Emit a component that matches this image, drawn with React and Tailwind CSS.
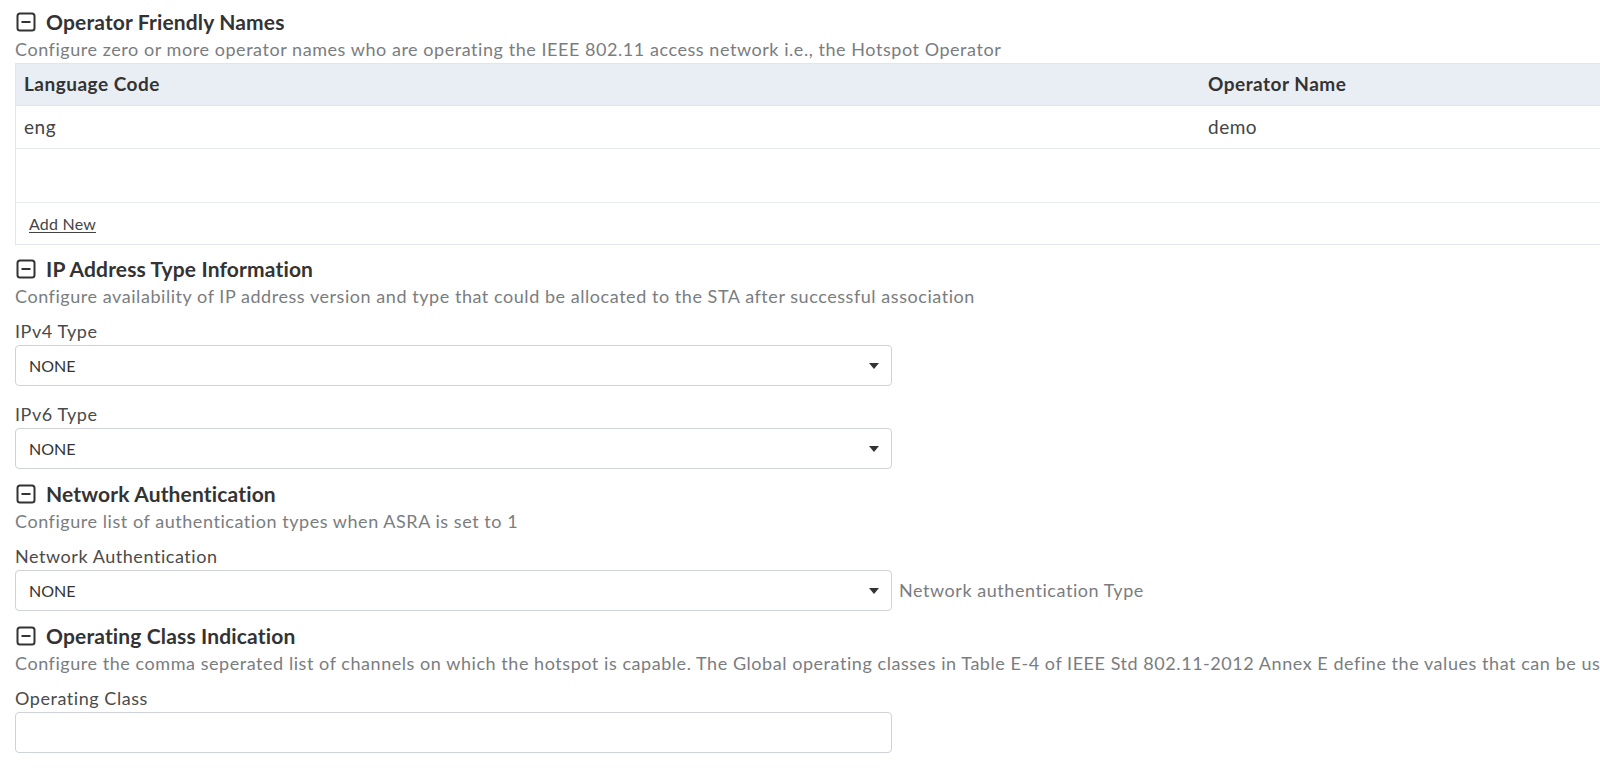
import React from "react";

function MinusBox() {
  return (
    <svg width="20" height="20" viewBox="0 0 20 20" className="shrink-0">
      <rect x="1.5" y="1.5" width="17" height="17" rx="2.5" fill="none" stroke="#333" strokeWidth="2" />
      <line x1="5.5" y1="10" x2="14.5" y2="10" stroke="#333" strokeWidth="2" />
    </svg>
  );
}

function Heading({ title }) {
  return (
    <div className="flex items-center gap-[10px] h-[26px] pl-[16px]">
      <MinusBox />
      <span className="text-[21px] tracking-[0.15px] font-bold text-[#333] leading-[26px] whitespace-nowrap">{title}</span>
    </div>
  );
}

function Desc({ children }) {
  return (
    <div className="mt-[2px] h-[24px] leading-[24px] text-[18px] tracking-[0.55px] text-[#7a7d80] pl-[15px] whitespace-nowrap">
      {children}
    </div>
  );
}

function Label({ children, first }) {
  return (
    <div className={`${first ? "mt-[11px]" : "mt-[16px]"} h-[24px] leading-[24px] text-[18px] tracking-[0.55px] text-[#4a4a4a] pl-[15px]`}>
      {children}
    </div>
  );
}

function Caret() {
  return (
    <svg width="10" height="6" viewBox="0 0 10 6">
      <path d="M0 0 L10 0 L5 6 Z" fill="#333" />
    </svg>
  );
}

function Select({ helper }) {
  return (
    <div className="mt-[2px] flex items-center pl-[15px]">
      <div className="w-[877px] h-[41px] border border-[#cfd2d6] rounded-[4px] bg-white flex items-center justify-between pl-[13px] pr-[12px]">
        <span className="text-[16px] text-[#333]">NONE</span>
        <Caret />
      </div>
      {helper && <span className="ml-[7px] text-[18px] tracking-[0.55px] text-[#7a7d80]">{helper}</span>}
    </div>
  );
}

export default function App() {
  return (
    <div className="w-[1600px] h-[768px] overflow-hidden bg-white font-['Lato',sans-serif]">
      <div className="w-[2600px] pt-[9px]">
        {/* Section 1 */}
        <Heading title="Operator Friendly Names" />
        <Desc>
          Configure zero or more operator names who are operating the IEEE 802.11 access network i.e., the Hotspot Operator
        </Desc>
        <div className="mt-[2px] ml-[15px] w-[2368px] border border-[#e1e6ec]">
          <div className="flex h-[42px] bg-[#e9eef4] border-b border-[#dfe4ea] items-center">
            <div className="w-[1184px] px-[8px] text-[19px] tracking-[0.5px] font-bold text-[#333]">Language Code</div>
            <div className="flex-1 px-[8px] text-[19px] tracking-[0.5px] font-bold text-[#333]">Operator Name</div>
          </div>
          <div className="flex h-[43px] border-b border-[#e6eaef] items-center">
            <div className="w-[1184px] px-[8px] text-[19px] tracking-[0.5px] text-[#444]">eng</div>
            <div className="flex-1 px-[8px] text-[19px] tracking-[0.5px] text-[#444]">demo</div>
          </div>
          <div className="h-[54px] border-b border-[#e6eaef]"></div>
          <div className="h-[41px] flex items-center px-[13px]">
            <span className="text-[16px] tracking-[0.2px] text-[#444] underline underline-offset-2">Add New</span>
          </div>
        </div>

        {/* Section 2 */}
        <div className="mt-[11px]">
          <Heading title="IP Address Type Information" />
          <Desc>Configure availability of IP address version and type that could be allocated to the STA after successful association</Desc>
          <Label first>IPv4 Type</Label>
          <Select />
          <Label>IPv6 Type</Label>
          <Select />
        </div>

        {/* Section 3 */}
        <div className="mt-[12px]">
          <Heading title="Network Authentication" />
          <Desc>Configure list of authentication types when ASRA is set to 1</Desc>
          <Label first>Network Authentication</Label>
          <Select helper="Network authentication Type" />
        </div>

        {/* Section 4 */}
        <div className="mt-[12px]">
          <Heading title="Operating Class Indication" />
          <Desc>
            Configure the comma seperated list of channels on which the hotspot is capable. The Global operating classes in Table E-4 of IEEE Std 802.11-2012 Annex E define the values that can be used
          </Desc>
          <Label first>Operating Class</Label>
          <div className="mt-[2px] pl-[15px]">
            <div className="w-[877px] h-[41px] border border-[#cfd2d6] rounded-[4px] bg-white"></div>
          </div>
        </div>

        {/* Section 5 (cut off at the bottom edge) */}
        <div className="mt-[12px]">
          <Heading title="Venue Information" />
        </div>
      </div>
    </div>
  );
}
